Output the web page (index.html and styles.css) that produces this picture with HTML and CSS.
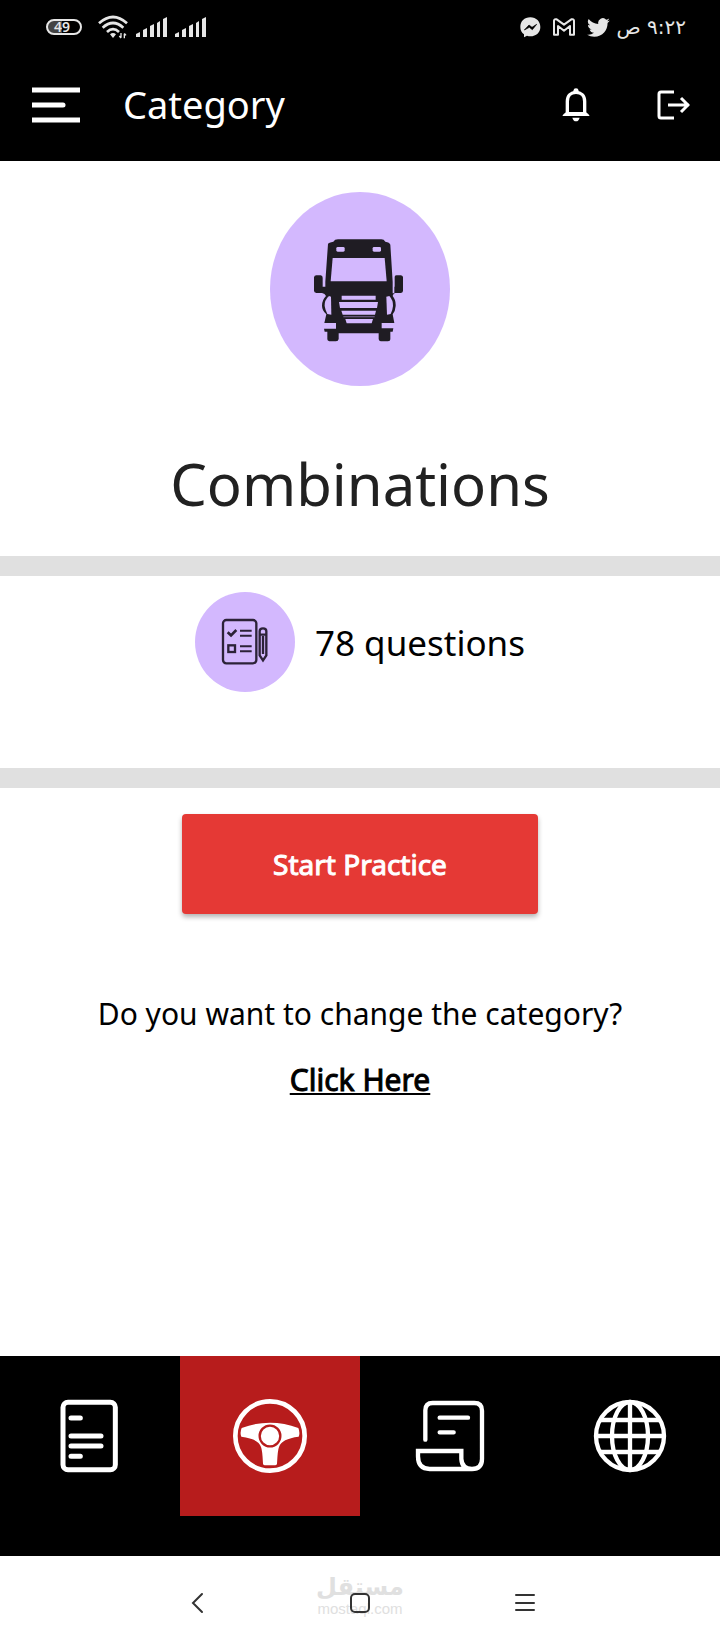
FILE: index.html
```html
<!DOCTYPE html>
<html lang="en">
<head>
  <meta charset="UTF-8">
  <meta name="viewport" content="width=device-width, initial-scale=1.0">
  <title>Category</title>
  <link rel="stylesheet" href="styles.css">
</head>
<body>

  <div class="status-bar">
    <div class="status-group">
      <span class="battery">49</span>
      <svg class="wifi" width="30" height="24" viewBox="0 0 90 72">
        <g fill="none" stroke="#e6e6e6" stroke-width="8">
          <path d="M3 25 Q45 -13 87 25"/>
          <path d="M14 38 Q45 10 76 38"/>
          <path d="M27 51 Q45 34 63 51"/>
        </g>
        <path d="M36 58 Q45 50 54 58 L45 69 Z" fill="#e6e6e6"/>
        <path d="M69 54 V68 M64 63 L69 69 M79 70 V56 M84 61 L79 55" stroke="#e6e6e6" stroke-width="4"/>
      </svg>
      <svg class="signal" width="31" height="20" viewBox="0 0 31 20" fill="#e6e6e6">
        <path d="M0 20V17L4 15V20ZM7 20V13L11 11V20ZM14 20V9L18 7V20ZM21 20V6L24 4V20ZM27 20V2L31 0V20Z"/>
      </svg>
      <svg class="signal" width="31" height="20" viewBox="0 0 31 20" fill="#e6e6e6">
        <path d="M0 20V17L4 15V20ZM7 20V13L11 11V20ZM14 20V9L18 7V20ZM21 20V6L24 4V20ZM27 20V2L31 0V20Z"/>
      </svg>
    </div>
    <div class="status-group status-right">
      <svg width="21" height="21" viewBox="0 0 63 63">
        <path d="M31 1C13 1 1 13 1 30c0 10 4 17 11 22v9l9-5c3 1 7 2 10 2 18 0 30-12 30-28S49 1 31 1z" fill="#e6e6e6"/>
        <path d="M13 39L27 24L36 31L50 22L37 38L28 31Z" fill="#000" stroke="#000" stroke-width="2" stroke-linejoin="round"/>
      </svg>
      <svg width="22" height="18" viewBox="0 0 66 54" fill="none" stroke="#e6e6e6" stroke-width="6" stroke-linejoin="round">
        <path d="M3 8Q4 2 11 4L33 20L55 4Q62 2 63 8V50H51V24L33 38L15 24V50H3Z"/>
      </svg>
      <svg width="23" height="19" viewBox="0 2 24 20" fill="#e6e6e6">
        <path d="M23.95 4.57a10 10 0 0 1-2.82.77 4.96 4.96 0 0 0 2.16-2.72c-.95.55-2 .95-3.13 1.18a4.92 4.92 0 0 0-8.38 4.48C7.69 8.1 4.07 6.13 1.64 3.16a4.92 4.92 0 0 0 1.52 6.57 4.9 4.9 0 0 1-2.23-.61v.06a4.92 4.92 0 0 0 3.95 4.83 5 5 0 0 1-2.21.08 4.94 4.94 0 0 0 4.6 3.42A9.87 9.87 0 0 1 0 19.54a14 14 0 0 0 7.55 2.21c9.05 0 14-7.5 14-13.98 0-.21 0-.42-.02-.63a9.94 9.94 0 0 0 2.42-2.57z"/>
      </svg>
      <span class="clock" lang="ar" dir="rtl">٩:٢٢ ص</span>
    </div>
  </div>

  <header class="app-bar">
    <button class="icon-btn" aria-label="Menu">
      <svg width="48" height="36" viewBox="0 0 48 36" stroke="#fff" stroke-width="5">
        <path d="M0 3H48M0 33H48"/>
        <path d="M0 18H31" stroke-linecap="round"/>
      </svg>
    </button>
    <h1 class="app-title">Category</h1>
    <button class="icon-btn bell" aria-label="Notifications">
      <svg width="28" height="34" viewBox="0 0 84 102">
        <path d="M16 78V40C16 22 27 13 42 13S68 22 68 40V78" fill="none" stroke="#fff" stroke-width="10"/>
        <path d="M34 14V8Q35 1 42 1T50 8V14ZM1 84Q2 79 13 72H71Q82 79 83 84ZM31 89H53Q50 100 42 100T31 89Z" fill="#fff"/>
      </svg>
    </button>
    <button class="icon-btn" aria-label="Log out">
      <svg width="34" height="30" viewBox="0 0 34 30" fill="none" stroke="#fff" stroke-width="3">
        <path d="M18 2H5Q3 2 3 4V26Q3 28 5 28H18"/>
        <path d="M12 15H33M25 8L32 15L25 22"/>
      </svg>
    </button>
  </header>

  <main class="content">
    <section class="hero">
      <svg class="truck" width="180" height="194" viewBox="60 36 540 582">
        <ellipse cx="330" cy="327" rx="270" ry="291" fill="#d3b8fe"/>
        <g fill="#1f1c23">
          <path d="M234 192Q236 187 250 185Q254 178 264 178H394Q402 178 406 185Q419 187 421 194L428 305V340H433V320H434V290Q435 286 440 286H453Q459 287 459 292V332Q459 338 453 339H435Q428 343 428 348Q438 360 437 378Q436 394 428 403L433 429H395V445H430L428 455H421V478Q421 484 414 484H392Q386 483 386 477V460H266V477Q265 484 258 484H238Q232 483 232 478V455H224L222 446H258V429H223L229 403Q216 391 216 377Q216 360 228 348Q225 340 216 339H199Q192 338 192 332V292Q193 286 199 286H212Q218 287 218 293V320H226V305Z"/>
        </g>
        <g fill="#d3b8fe">
          <path d="M248 234H404L410 304H242Z"/>
          <rect x="259" y="201" width="25" height="14" rx="4"/>
          <rect x="368" y="201" width="25" height="14" rx="4"/>
          <path d="M237 348Q223 360 224 378Q226 391 232 402L244 404L243 350Z"/>
          <path d="M418 348Q430 361 429 378Q428 391 422 402L411 404L409 350Z"/>
          <path d="M275 347H377V359H275ZM267 366H384L381 384H270ZM274 392H378L375 404H278ZM286 417H369L365 430H290Z"/>
        </g>
        <path d="M280 410H374" stroke="#65547a" stroke-width="4"/>
      </svg>
      <h2 class="category-name">Combinations</h2>
    </section>

    <section class="questions">
      <svg width="100" height="100" viewBox="45 66 300 300">
        <circle cx="195" cy="216" r="150" fill="#d3b8fe"/>
        <g fill="none" stroke="#2c2238" stroke-width="7">
          <rect x="129" y="150" width="100" height="130" rx="10"/>
          <path d="M143 187L153 196L169 180" stroke-width="8"/>
          <path d="M180 182H215M180 197H215M180 229H215M180 244H215" stroke-width="6"/>
          <rect x="145" y="226" width="20" height="20"/>
          <path d="M239 184Q239 175 249 175T259 184V256L249 271L239 256ZM239 194H259M249 198V252"/>
        </g>
      </svg>
      <p class="question-count">78 questions</p>
    </section>

    <section class="actions">
      <button class="start-btn">Start Practice</button>
      <p class="change-text">Do you want to change the category?</p>
      <a class="change-link" href="#">Click Here</a>
    </section>
  </main>

  <nav class="tabs">
    <a class="tab" href="#" aria-label="Handbook">
      <svg width="74" height="74" viewBox="0 0 222 222" fill="none" stroke="#fff" stroke-linecap="round">
        <rect x="30" y="10" width="157" height="202" rx="15" stroke-width="15"/>
        <path d="M54 57H82M54 111H144M54 141H144M54 172H82" stroke-width="15"/>
      </svg>
    </a>
    <a class="tab active" href="#" aria-label="Practice">
      <svg width="74" height="74" viewBox="0 0 222 222">
        <circle cx="111" cy="111" r="104" fill="none" stroke="#fff" stroke-width="14"/>
        <path d="M26 87Q68 71 111 71T196 87Q202 101 197 113Q146 119 138 144Q134 153 132 194Q131 199 126 199H96Q91 199 90 194Q88 153 84 144Q76 119 25 113Q20 101 26 87Z" fill="#fff"/>
        <circle cx="111" cy="111" r="31" fill="#fff" stroke="#b71c1c" stroke-width="7"/>
      </svg>
    </a>
    <a class="tab" href="#" aria-label="Results">
      <svg width="74" height="74" viewBox="0 0 222 222" fill="none" stroke="#fff" stroke-width="13" stroke-linecap="round">
        <path d="M37 122V34Q37 12 59 12H184Q207 12 207 35V180Q207 210 177 210Q147 210 145 180V156H15V172Q15 210 50 210H177"/>
        <path d="M80 56H165M80 100H122"/>
      </svg>
    </a>
    <a class="tab" href="#" aria-label="Language">
      <svg width="74" height="74" viewBox="0 0 222 222" fill="none" stroke="#fff" stroke-width="13">
        <circle cx="111" cy="111" r="102"/>
        <path d="M111 9V213M9 111H213M23 63H199M23 159H199"/>
        <ellipse cx="111" cy="111" rx="54" ry="102"/>
      </svg>
    </a>
  </nav>

  <div class="system-nav">
    <button class="icon-btn" aria-label="Back">
      <svg width="20" height="22" viewBox="0 0 20 22" fill="none" stroke="#333" stroke-width="2" stroke-linecap="round">
        <path d="M17 2L8 11L17 20"/>
      </svg>
    </button>
    <div class="home">
      <div class="watermark">
        <span class="watermark-ar" lang="ar" dir="rtl">مستقل</span>
        <span class="watermark-en">mostaql.com</span>
      </div>
      <button class="icon-btn" aria-label="Home">
        <svg width="20" height="20" viewBox="0 0 20 20" fill="none" stroke="#333" stroke-width="2">
          <rect x="1" y="1" width="18" height="18" rx="4"/>
        </svg>
      </button>
    </div>
    <button class="icon-btn" aria-label="Recent apps">
      <svg width="20" height="20" viewBox="0 0 20 20" stroke="#333" stroke-width="2" stroke-linecap="round">
        <path d="M1 2H19M1 10H19M1 17H19"/>
      </svg>
    </button>
  </div>

</body>
</html>
```
FILE: styles.css
```css
* {
  box-sizing: border-box;
}

body {
  margin: 0;
  min-height: 100vh;
  display: flex;
  flex-direction: column;
  background-color: #fff;
  color: #000;
  font-family: "Noto Sans", sans-serif;
}

h1, h2, p {
  margin: 0;
  font-weight: 400;
}

svg {
  display: block;
  flex: none;
}

.icon-btn {
  padding: 0;
  border: none;
  background: none;
  cursor: pointer;
}

/* status bar */
.status-bar {
  display: flex;
  justify-content: space-between;
  height: 50px;
  padding: 4px 34px 0 46px;
  background-color: #000;
  color: #e6e6e6;
}

.status-group {
  display: flex;
  align-items: center;
  gap: 8px;
}

.status-right {
  gap: 12px;
}

.battery {
  width: 36px;
  height: 16px;
  padding-left: 6px;
  border: 2px solid #e6e6e6;
  border-radius: 8px;
  background: linear-gradient(to right, #444 45%, #000 45%);
  font-size: 14px;
  font-weight: 600;
  line-height: 12px;
}

.wifi {
  margin-left: 8px;
}

.clock {
  margin-left: -6px;
  font-family: "DejaVu Sans", sans-serif;
  font-size: 20px;
  line-height: 30px;
}

/* app bar */
.app-bar {
  display: flex;
  align-items: center;
  height: 111px;
  padding: 0 30px 2px 32px;
  background-color: #000;
  color: #fff;
}

.app-title {
  flex: 1;
  margin-left: 43px;
  padding-bottom: 2px;
  font-size: 38px;
}

.bell {
  margin-right: 66px;
}

/* content */
.content {
  flex: 1;
}

.hero {
  display: flex;
  flex-direction: column;
  align-items: center;
  padding: 31px 0 32px;
  border-bottom: 20px solid #e0e0e0;
}

.category-name {
  margin-top: 58px;
  color: #212121;
  font-size: 58px;
  line-height: 80px;
}

.questions {
  display: flex;
  justify-content: center;
  align-items: center;
  gap: 20px;
  padding: 16px 0 76px;
  border-bottom: 20px solid #e0e0e0;
}

.question-count {
  font-size: 35px;
}

.actions {
  display: flex;
  flex-direction: column;
  align-items: center;
  padding: 26px 16px;
}

.start-btn {
  width: 356px;
  max-width: 100%;
  height: 100px;
  border: none;
  border-radius: 4px;
  background-color: #e53935;
  box-shadow: 0 3px 5px rgba(0, 0, 0, 0.3);
  color: #fff;
  font-family: inherit;
  font-size: 28px;
  -webkit-text-stroke: 1px #fff;
  cursor: pointer;
}

.change-text {
  margin-top: 80px;
  font-size: 30px;
  line-height: 40px;
  text-align: center;
}

.change-link {
  margin-top: 26px;
  color: #000;
  font-size: 30px;
  line-height: 40px;
  -webkit-text-stroke: 1px #000;
  text-decoration-thickness: 2px;
  text-underline-offset: 2px;
  text-decoration-skip-ink: none;
}

/* bottom tabs */
.tabs {
  display: grid;
  grid-template-columns: repeat(4, 1fr);
  padding-bottom: 40px;
  background-color: #000;
}

.tab {
  display: flex;
  justify-content: center;
  align-items: center;
  height: 160px;
}

.tab.active {
  background-color: #b71c1c;
}

/* phone navigation */
.system-nav {
  display: flex;
  justify-content: center;
  align-items: center;
  gap: 145px;
  height: 94px;
}

.home {
  position: relative;
}

.watermark {
  position: absolute;
  bottom: -4px;
  left: 50%;
  transform: translateX(-50%);
  display: flex;
  flex-direction: column;
  align-items: center;
  color: #e0e0e0;
}

.watermark-ar {
  font-family: "DejaVu Sans", sans-serif;
  font-size: 24px;
  font-weight: 700;
  line-height: 28px;
}

.watermark-en {
  font-family: "Liberation Sans", sans-serif;
  font-size: 15px;
  line-height: 16px;
}

.home .icon-btn {
  position: relative;
  display: block;
}
```
